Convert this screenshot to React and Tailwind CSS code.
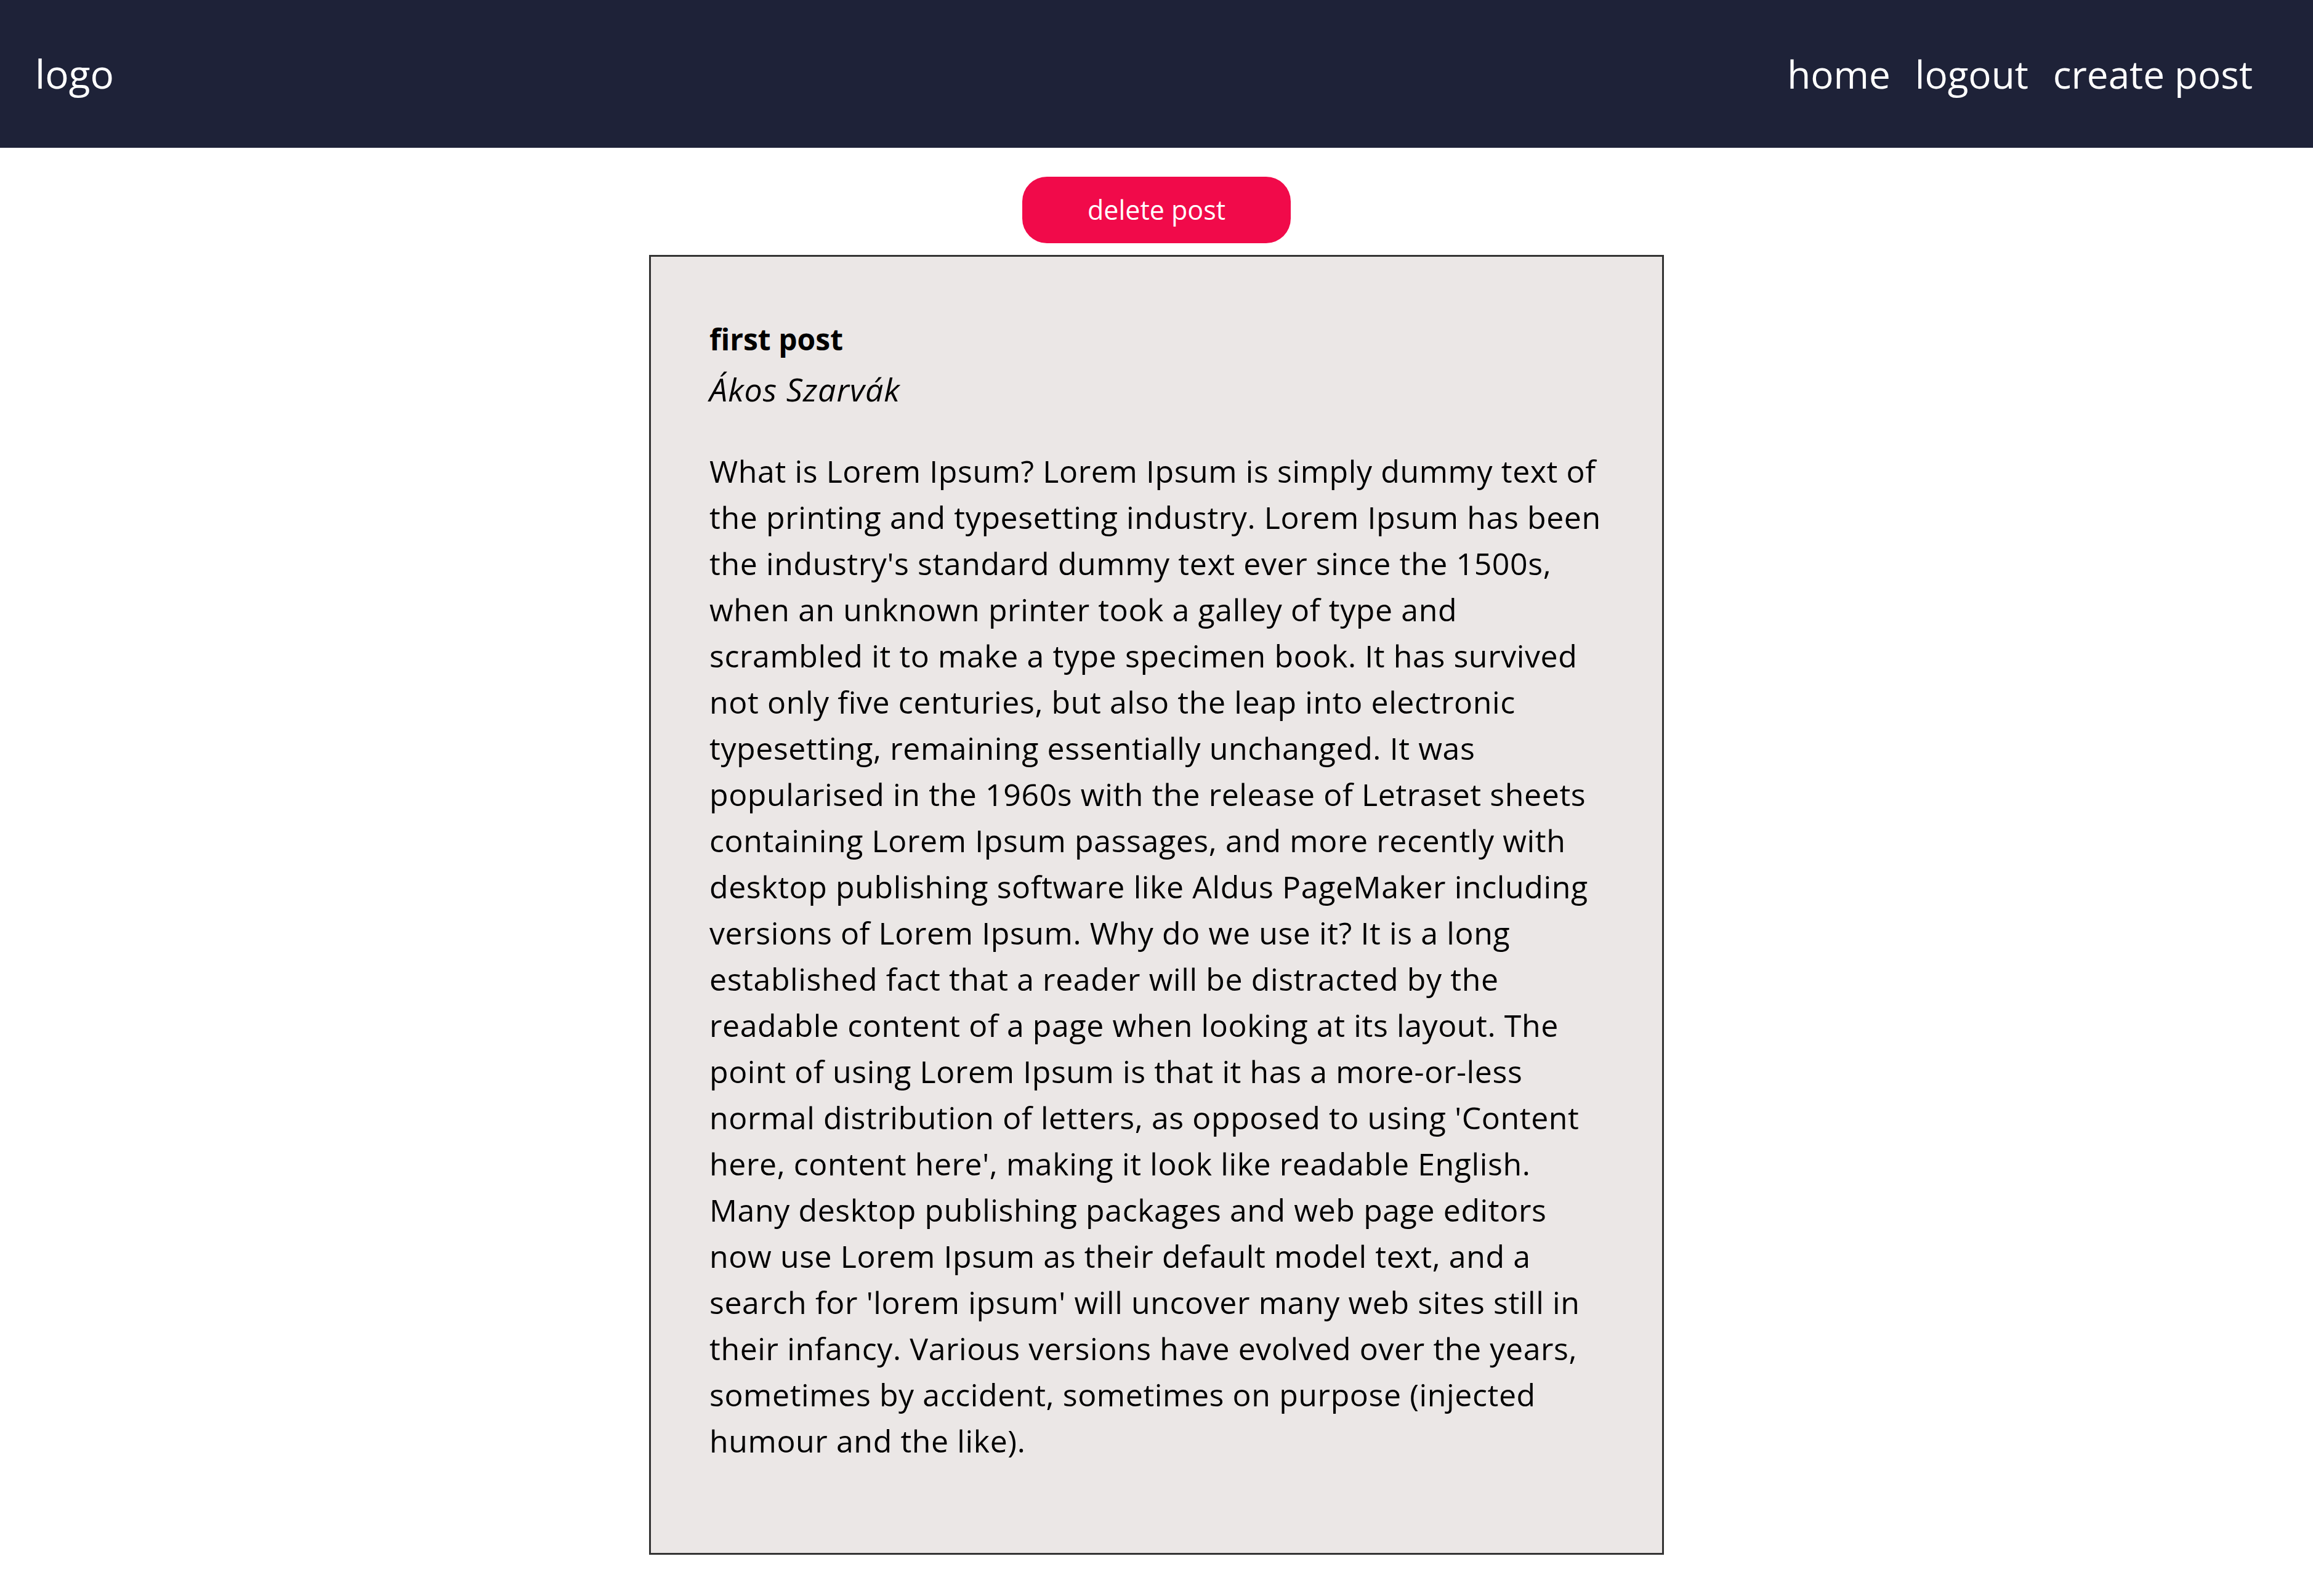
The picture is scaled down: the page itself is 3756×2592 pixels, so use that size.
import React from "react";

const lines = [
  "What is Lorem Ipsum? Lorem Ipsum is simply dummy text of",
  "the printing and typesetting industry. Lorem Ipsum has been",
  "the industry's standard dummy text ever since the 1500s,",
  "when an unknown printer took a galley of type and",
  "scrambled it to make a type specimen book. It has survived",
  "not only five centuries, but also the leap into electronic",
  "typesetting, remaining essentially unchanged. It was",
  "popularised in the 1960s with the release of Letraset sheets",
  "containing Lorem Ipsum passages, and more recently with",
  "desktop publishing software like Aldus PageMaker including",
  "versions of Lorem Ipsum. Why do we use it? It is a long",
  "established fact that a reader will be distracted by the",
  "readable content of a page when looking at its layout. The",
  "point of using Lorem Ipsum is that it has a more-or-less",
  "normal distribution of letters, as opposed to using 'Content",
  "here, content here', making it look like readable English.",
  "Many desktop publishing packages and web page editors",
  "now use Lorem Ipsum as their default model text, and a",
  "search for 'lorem ipsum' will uncover many web sites still in",
  "their infancy. Various versions have evolved over the years,",
  "sometimes by accident, sometimes on purpose (injected",
  "humour and the like).",
];

export default function App() {
  return (
    <div className="min-h-screen bg-white font-['Open_Sans',sans-serif]">
      <nav className="h-[240px] bg-[#1e2238] flex items-center justify-between pl-[57px] pr-[98px] text-white">
        <span className="text-[64px] leading-none">logo</span>
        <div className="flex gap-[40px] text-[62px] leading-none">
          <a>home</a>
          <a>logout</a>
          <a>create post</a>
        </div>
      </nav>
      <main className="flex flex-col items-center pt-[47px]">
        <button className="w-[436px] h-[108px] rounded-[40px] bg-[#f10a4a] text-white text-[43px]">
          delete post
        </button>
        <article className="mt-[19px] w-[1648px] h-[2111px] border-[3px] border-[#333333] bg-[#ebe7e6] px-[95px] pt-[98px] text-black">
          <h2 className="text-[48px] leading-[72px] font-bold">first post</h2>
          <p className="mt-[9px] text-[52px] leading-[72px] italic tracking-[1px]">Ákos Szarvák</p>
          <p className="mt-[60px] text-[50px] leading-[75px] tracking-[0.6px] whitespace-nowrap">
            {lines.map((l, i) => (
              <React.Fragment key={i}>
                {l}
                {i < lines.length - 1 && <br />}
              </React.Fragment>
            ))}
          </p>
        </article>
      </main>
    </div>
  );
}
